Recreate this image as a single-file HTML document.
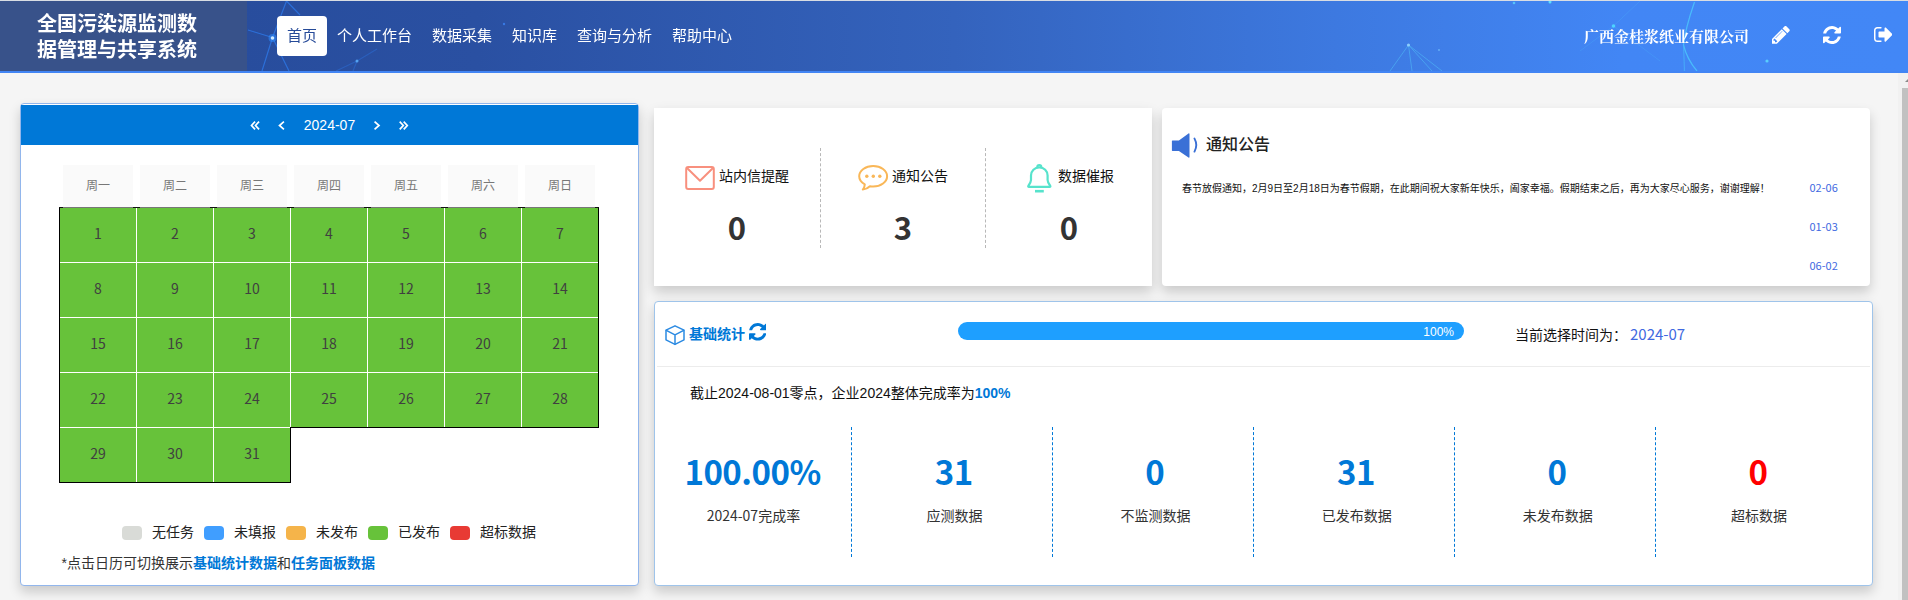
<!DOCTYPE html>
<html lang="zh-CN">
<head>
<meta charset="utf-8">
<title>全国污染源监测数据管理与共享系统</title>
<style>
*{box-sizing:border-box;margin:0;padding:0}
html,body{width:1908px;height:600px;overflow:hidden;background:#f5f5f5}
body{position:relative;font-family:"Liberation Sans","Noto Sans CJK SC",sans-serif;font-size:14px;color:#333}
.abs{position:absolute}
.cjk{font-family:"Noto Sans CJK SC","Liberation Sans",sans-serif}
/* header */
#hdr{position:absolute;left:0;top:0;width:1908px;height:73px;background:linear-gradient(90deg,#264a98 0%,#2a50a2 25%,#3463bd 50%,#3d79e0 70%,#4286f5 85%,#4287f6 100%);border-top:1px solid #d9dde3;border-bottom:2px solid #4285f4;overflow:hidden}
#logo{position:absolute;left:0;top:0;width:247px;height:70px;background:#38528a}
#logo div{position:absolute;left:37px;top:10px;width:180px;color:#fff;font-weight:bold;font-size:20px;line-height:26px;white-space:nowrap;font-family:"Liberation Sans","Noto Sans CJK SC",sans-serif}
#nav{position:absolute;left:277px;top:15px;height:40px;white-space:nowrap;font-size:15px;color:#fff}
#nav span{display:inline-block;height:40px;line-height:39px;padding:0 10px;border-radius:4px;vertical-align:top}
#nav span.on{background:#fff;color:#264a98}
#corp{position:absolute;left:1584px;top:26px;font-family:"Liberation Serif","Noto Serif CJK SC",serif;font-weight:bold;font-size:15px;line-height:20px;color:#fff;white-space:nowrap}
.hic{position:absolute;fill:#fff}
/* scrollbar */
#sbt{position:absolute;left:1898px;top:73px;width:10px;height:527px;background:#f1f1f1}
#sbh{position:absolute;left:1902px;top:88px;width:6px;height:512px;background:#c1c1c1}
#sba{position:absolute;left:1904.5px;top:78px;width:0;height:0;border-left:4px solid transparent;border-right:4px solid transparent;border-bottom:4px solid #8a8a8a}
/* cards */
.card{position:absolute;background:#fff;border-radius:4px}
#cal{left:20px;top:103px;width:619px;height:483px;border:1px solid #92b6ec;box-shadow:0 6px 12px rgba(0,0,0,.175)}
#calh{position:absolute;left:0;top:1px;width:617px;height:40px;background:#0078d7;color:#fff;font-size:14px;line-height:40px;text-align:center}
.wk{position:absolute;top:61px;width:70px;height:42px;background:#fafafa;color:#777;font-size:12px;line-height:42px;text-align:center}
#grid{position:absolute;left:38px;top:103px;width:540px;height:276px}
.cell{position:absolute;width:76px;height:54px;background:#67c23a;color:#404040;font-size:14px;line-height:51px;text-align:center;font-family:"Noto Sans CJK SC","Liberation Sans",sans-serif}
.leg{position:absolute;top:422px;width:20px;height:14px;border-radius:4px}
.legt{position:absolute;top:418px;font-size:14px;line-height:20px;color:#222;white-space:nowrap}
#note{position:absolute;left:40.6px;top:449px;font-size:14px;line-height:20px;color:#333;white-space:nowrap}
#note b{color:#0078d7}
#mid{left:654px;top:108px;width:498px;height:178px;box-shadow:0 6px 12px rgba(0,0,0,.175);border-radius:0}
.mcol{position:absolute;top:40px;width:0;height:100px;border-left:1px dashed #b8b8b8}
.mlab{position:absolute;top:58px;font-size:14px;line-height:20px;color:#111;white-space:nowrap}
.mnum{position:absolute;top:96.5px;width:166px;text-align:center;font-size:31px;line-height:44px;font-weight:bold;color:#333;font-family:"Noto Sans CJK SC","Liberation Sans",sans-serif}
#ntc{left:1162px;top:108px;width:708px;height:178px;box-shadow:0 6px 12px rgba(0,0,0,.175)}
#ntct{position:absolute;left:44px;top:25px;font-size:16px;line-height:24px;font-weight:500;color:#222;white-space:nowrap}
#ntcx{position:absolute;left:20px;top:74px;font-size:10px;line-height:14px;color:#111;white-space:nowrap}
.dt{position:absolute;left:647.5px;font-size:11px;line-height:16px;color:#4169e1;white-space:nowrap;font-family:"Noto Sans CJK SC","Liberation Sans",sans-serif}
#st{left:654px;top:301px;width:1219px;height:285px;border:1px solid #9fc4ea;box-shadow:0 6px 12px rgba(0,0,0,.175)}
#sthl{position:absolute;left:2px;top:64px;width:1213px;height:1px;background:#ececec}
#stt{position:absolute;left:34px;top:22px;font-size:14px;line-height:20px;font-weight:bold;color:#0078d7;white-space:nowrap}
#pg{position:absolute;left:303px;top:20px;width:506px;height:18px;border-radius:9px;background:#1e9fff;color:#fff;font-size:12px;line-height:20px;text-align:right;padding-right:10px}
#cur{position:absolute;left:860px;top:23px;font-size:14px;line-height:20px;color:#111;white-space:nowrap}
#curv{position:absolute;left:975px;top:21.4px;font-size:15px;line-height:22px;color:#4169e1;white-space:nowrap;font-family:"Noto Sans CJK SC","Liberation Sans",sans-serif}
#sum{position:absolute;left:35px;top:81px;font-size:14px;line-height:20px;color:#111;white-space:nowrap}
#sum b{color:#0078d7}
.sc{position:absolute;top:125px;width:0;height:130px;border-left:1px dashed #0078d7}
.sn{position:absolute;top:144px;margin-left:-.8px;width:200px;text-align:center;font-size:33px;letter-spacing:-.5px;line-height:50px;font-weight:bold;color:#0078d7;font-family:"Noto Sans CJK SC","Liberation Sans",sans-serif}
.sl{position:absolute;top:203px;width:200px;text-align:center;font-size:14px;line-height:20px;color:#333;font-family:"Noto Sans CJK SC","Liberation Sans",sans-serif}
</style>
</head>
<body>
<div id="hdr">
<svg class="abs" style="left:0;top:0;filter:blur(.6px)" width="1908" height="70" viewBox="0 0 1908 70" fill="none">
<g stroke="#2f86ff" stroke-width="1.2" opacity=".6">
<path d="M272.500 36.500L286.500 0M272.500 36.500L289 70M272.500 36.500L248 29M272.500 36.500L262 70M286.500 0L300 14"/>
<path d="M357 60L353 70M357 60L377 48M357 60L336 70" opacity=".5"/>
</g>
<circle cx="272.500" cy="37" r="4" fill="#2f8cff" opacity=".55"/><circle cx="272.500" cy="37" r="1.800" fill="#cfeaff"/>
<circle cx="357" cy="60" r="1.500" fill="#5fb4ff" opacity=".8"/>
<circle cx="504" cy="23" r="1.200" fill="#3f8cff" opacity=".7"/>
<g stroke="#58d8ff" stroke-width="1" opacity=".4">
<path d="M1408.500 44L1390 70M1408.500 44L1412 70M1408.500 44L1442 70M1408.500 44L1432 70"/>
<path d="M1613.500 25L1640 0M1613.500 25L1580 50M1613.500 25L1660 60" opacity=".4"/>
</g>
<g stroke="#4fe0ff" stroke-width="1.200" opacity=".6">
<path d="M1694.500 1C1690 14 1685 30 1683.500 44C1686 54 1691 63 1697 70"/>
<path d="M1683.500 44L1684.500 70" opacity=".6"/>
</g>
<circle cx="1408.500" cy="44" r="1.600" fill="#9fdcff" opacity=".8"/>
<circle cx="1439" cy="49" r="1" fill="#7fd0ff" opacity=".6"/>
<circle cx="1514" cy="2" r="1.300" fill="#5fe0ff" opacity=".7"/>
<circle cx="1550" cy="1" r="1.500" fill="#5fe8ff" opacity=".9"/>
<circle cx="1613.500" cy="25" r="1.800" fill="#4fdcff" opacity=".9"/>
<circle cx="1767" cy="60" r="1.600" fill="#5fe0ff" opacity=".8"/>
</svg>
<div id="logo"><div>全国污染源监测数<br>据管理与共享系统</div></div>
<div id="nav"><span class="on">首页</span><span>个人工作台</span><span>数据采集</span><span>知识库</span><span>查询与分析</span><span>帮助中心</span></div>
<div id="corp">广西金桂浆纸业有限公司</div>
<svg class="abs" style="left:1772.4px;top:25.2px" width="17.75" height="17.75" viewBox="0 -1387 1515 1515" preserveAspectRatio="none"><path fill="#fff" transform="scale(1,-1)" d="M363 0H256V128H128V235L219 326L454 91ZM886 928C886 922 884 916 879 911L337 369C332 364 326 362 320 362C307 362 298 371 298 384C298 390 300 396 305 401L847 943C852 948 858 950 864 950C877 950 886 941 886 928ZM832 1120 0 288V-128H416L1248 704ZM1515 1024C1515 1058 1501 1091 1478 1115L1243 1349C1219 1373 1186 1387 1152 1387C1118 1387 1085 1373 1062 1349L896 1184L1312 768L1478 934C1501 957 1515 990 1515 1024Z"/></svg>
<svg class="abs" style="left:1822.8px;top:24.8px" width="18" height="18" viewBox="0 -1408 1536 1536" preserveAspectRatio="none"><path fill="#fff" transform="scale(1,-1)" d="M1511 480C1511 497 1497 512 1479 512H1287C1272 512 1262 503 1257 489C1240 449 1228 411 1204 372C1111 220 946 128 768 128C639 128 514 178 420 266L557 403C569 415 576 431 576 448C576 483 547 512 512 512H64C29 512 0 483 0 448V0C0 -35 29 -64 64 -64C81 -64 97 -57 109 -45L238 84C380 -51 569 -128 764 -128C1133 -128 1425 119 1510 473C1511 475 1511 478 1511 480ZM1536 1280C1536 1315 1507 1344 1472 1344C1455 1344 1439 1337 1427 1325L1297 1196C1155 1330 964 1408 768 1408C399 1408 104 1162 18 807C18 805 18 802 18 800C18 783 32 768 50 768H249C264 768 274 777 279 791C296 831 308 869 332 908C425 1060 590 1152 768 1152C897 1152 1022 1103 1117 1015L979 877C967 865 960 849 960 832C960 797 989 768 1024 768H1472C1507 768 1536 797 1536 832Z"/></svg>
<svg class="abs" style="left:1873.8px;top:26.4px" width="18.4" height="15" viewBox="0 -1280 1568 1280" preserveAspectRatio="none"><path fill="#fff" transform="scale(1,-1)" d="M640 96C640 133 601 128 576 128H288C200 128 128 200 128 288V992C128 1080 200 1152 288 1152H608C653 1152 640 1220 640 1248C640 1265 625 1280 608 1280H288C129 1280 0 1151 0 992V288C0 129 129 0 288 0H608C653 0 640 68 640 96ZM1568 640C1568 657 1561 673 1549 685L1005 1229C993 1241 977 1248 960 1248C925 1248 896 1219 896 1184V896H448C413 896 384 867 384 832V448C384 413 413 384 448 384H896V96C896 61 925 32 960 32C977 32 993 39 1005 51L1549 595C1561 607 1568 623 1568 640Z"/></svg>
</div>
<div id="sbt"></div><div id="sbh"></div><div id="sba"></div>
<div class="card" id="cal">
<div id="calh">2024-07<svg class="abs" style="left:229px;top:14px" width="160" height="13" viewBox="0 0 160 13" fill="none" stroke="#fff" stroke-width="1.700" stroke-linecap="square" stroke-linejoin="miter"><polyline points="4.500,3.200 1.500,6.500 4.500,9.800"/><polyline points="8.500,3.200 5.500,6.500 8.500,9.800"/><polyline points="33.300,3.200 29.500,6.500 33.300,9.800"/><polyline points="125.200,3.200 129,6.500 125.200,9.800"/><polyline points="150.300,3.200 153.300,6.500 150.300,9.800"/><polyline points="154.300,3.200 157.300,6.500 154.300,9.800"/></svg></div>
<div class="wk" style="left:42px">周一</div><div class="wk" style="left:119px">周二</div><div class="wk" style="left:196px">周三</div><div class="wk" style="left:273px">周四</div><div class="wk" style="left:350px">周五</div><div class="wk" style="left:427px">周六</div><div class="wk" style="left:504px">周日</div>
<div id="grid"><div class="abs" style="left:0;top:0;width:540px;height:221px;background:#000"></div><div class="abs" style="left:0;top:0;width:232px;height:276px;background:#000"></div><div class="abs" style="left:1px;top:1px;width:538px;height:219px;background:#fff"></div><div class="abs" style="left:1px;top:1px;width:230px;height:274px;background:#fff"></div><div class="abs" style="left:1px;top:0;width:538px;height:1px;background:#777"></div><div class="abs" style="left:0;top:0;width:4px;height:1px;background:#111"></div><div class="abs" style="left:74px;top:0;width:7px;height:1px;background:#111"></div><div class="abs" style="left:151px;top:0;width:7px;height:1px;background:#111"></div><div class="abs" style="left:228px;top:0;width:7px;height:1px;background:#111"></div><div class="abs" style="left:305px;top:0;width:7px;height:1px;background:#111"></div><div class="abs" style="left:382px;top:0;width:7px;height:1px;background:#111"></div><div class="abs" style="left:459px;top:0;width:7px;height:1px;background:#111"></div><div class="abs" style="left:536px;top:0;width:4px;height:1px;background:#111"></div><div class="cell" style="left:1px;top:1px">1</div><div class="cell" style="left:78px;top:1px">2</div><div class="cell" style="left:155px;top:1px">3</div><div class="cell" style="left:232px;top:1px">4</div><div class="cell" style="left:309px;top:1px">5</div><div class="cell" style="left:386px;top:1px">6</div><div class="cell" style="left:463px;top:1px">7</div><div class="cell" style="left:1px;top:56px">8</div><div class="cell" style="left:78px;top:56px">9</div><div class="cell" style="left:155px;top:56px">10</div><div class="cell" style="left:232px;top:56px">11</div><div class="cell" style="left:309px;top:56px">12</div><div class="cell" style="left:386px;top:56px">13</div><div class="cell" style="left:463px;top:56px">14</div><div class="cell" style="left:1px;top:111px">15</div><div class="cell" style="left:78px;top:111px">16</div><div class="cell" style="left:155px;top:111px">17</div><div class="cell" style="left:232px;top:111px">18</div><div class="cell" style="left:309px;top:111px">19</div><div class="cell" style="left:386px;top:111px">20</div><div class="cell" style="left:463px;top:111px">21</div><div class="cell" style="left:1px;top:166px">22</div><div class="cell" style="left:78px;top:166px">23</div><div class="cell" style="left:155px;top:166px">24</div><div class="cell" style="left:232px;top:166px">25</div><div class="cell" style="left:309px;top:166px">26</div><div class="cell" style="left:386px;top:166px">27</div><div class="cell" style="left:463px;top:166px">28</div><div class="cell" style="left:1px;top:221px">29</div><div class="cell" style="left:78px;top:221px">30</div><div class="cell" style="left:155px;top:221px">31</div></div>
<div class="leg" style="left:101px;background:#d9dbd7"></div><div class="legt" style="left:131px">无任务</div><div class="leg" style="left:183px;background:#409eff"></div><div class="legt" style="left:213px">未填报</div><div class="leg" style="left:265px;background:#f5b44a"></div><div class="legt" style="left:295px">未发布</div><div class="leg" style="left:347px;background:#67c23a"></div><div class="legt" style="left:377px">已发布</div><div class="leg" style="left:429px;background:#e83a34"></div><div class="legt" style="left:459px">超标数据</div>
<div id="note">*点击日历可切换展示<b>基础统计数据</b>和<b>任务面板数据</b></div>
</div>
<div class="card" id="mid">
<div class="mcol" style="left:166px"></div><div class="mcol" style="left:331px"></div>
<svg class="abs" style="left:30px;top:56px" width="32" height="27" viewBox="0 0 32 27" fill="none" stroke="#f8907e" stroke-width="2" stroke-linejoin="round" stroke-linecap="round"><rect x="2.200" y="3.100" width="27.600" height="21.800" rx="2"/><polyline points="3,4 16,16.800 29,4"/></svg><div class="mlab" style="left:65px">站内信提醒</div><div class="mnum" style="left:0">0</div>
<svg class="abs" style="left:203px;top:56px" width="32" height="28" viewBox="0 0 32 28" fill="none" stroke="#f9b758" stroke-width="2" stroke-linejoin="round" stroke-linecap="round"><path d="M16.200 2C8.500 2 2.200 6.500 2.200 12.200c0 3.400 2.200 6.300 5.600 8.200c-.1 2-.8 3.800-2 5.200c2.900-.4 5.300-1.600 7.100-3.400c1.100.2 2.200.3 3.300.3c7.700 0 13.900-4.600 13.900-10.300S23.900 2 16.200 2z"/><g fill="#f9b758" stroke="none"><circle cx="9.800" cy="12.300" r="1.700"/><circle cx="16.300" cy="12.300" r="1.700"/><circle cx="22.800" cy="12.300" r="1.700"/></g></svg><div class="mlab" style="left:238px">通知公告</div><div class="mnum" style="left:166px">3</div>
<svg class="abs" style="left:372px;top:54px" width="28" height="32" viewBox="0 0 28 32" fill="none" stroke="#57e3cc" stroke-width="2.200" stroke-linejoin="round" stroke-linecap="round"><path d="M11.300 5.200A2 2 0 1 1 15.300 5.200"/><path d="M13.300 5.400C8.600 5.400 5 9 5 13.600V18C5 20 3.600 22.200 2.300 24C2 24.500 2.300 24.900 2.900 24.900H23.700C24.300 24.900 24.600 24.500 24.300 24C23 22.200 21.600 20 21.600 18V13.600C21.600 9 18 5.400 13.300 5.400Z"/><line x1="9" y1="29.200" x2="17.800" y2="29.200" stroke-width="2.600" stroke-linecap="butt"/></svg><div class="mlab" style="left:404px">数据催报</div><div class="mnum" style="left:332px">0</div>
</div>
<div class="card" id="ntc">
<svg class="abs" style="left:9px;top:24px" width="28" height="28" viewBox="0 0 28 28"><path fill="#3a70d6" d="M1.400 8.600h6.500l9.600-7.200c.5-.4 1-.1 1 .5v23.200c0 .6-.5.900-1 .5l-9.600-6.600H1.400c-.3 0-.5-.2-.5-.5V9.100c0-.3.200-.5.500-.5z"/><path fill="none" stroke="#3a70d6" stroke-width="1.900" stroke-linecap="round" d="M23.500 6.600C25.700 10.600 25.700 15.600 23.500 19.600"/></svg><div id="ntct">通知公告</div>
<div id="ntcx">春节放假通知，2月9日至2月18日为春节假期，在此期间祝大家新年快乐，阖家幸福。假期结束之后，再为大家尽心服务，谢谢理解！</div>
<div class="dt" style="top:71px">02-06</div><div class="dt" style="top:110px">01-03</div><div class="dt" style="top:149px">06-02</div>
</div>
<div class="card" id="st">
<div id="sthl"></div>
<svg class="abs" style="left:9px;top:22px" width="22" height="22" viewBox="0 0 22 22" fill="none" stroke="#2b8ae2" stroke-width="1.500" stroke-linejoin="round" stroke-linecap="round"><path d="M11 1.800L20 6.200V15.800L11 20.400L2 15.800V6.200Z"/><path d="M2.300 6.400L11 10.800L19.700 6.400M11 10.800V20.200"/></svg><div id="stt">基础统计</div><svg class="abs" style="left:93.5px;top:21px" width="17.6" height="17.6" viewBox="0 -1408 1536 1536" preserveAspectRatio="none"><path fill="#0078d7" transform="scale(1,-1)" d="M1511 480C1511 497 1497 512 1479 512H1287C1272 512 1262 503 1257 489C1240 449 1228 411 1204 372C1111 220 946 128 768 128C639 128 514 178 420 266L557 403C569 415 576 431 576 448C576 483 547 512 512 512H64C29 512 0 483 0 448V0C0 -35 29 -64 64 -64C81 -64 97 -57 109 -45L238 84C380 -51 569 -128 764 -128C1133 -128 1425 119 1510 473C1511 475 1511 478 1511 480ZM1536 1280C1536 1315 1507 1344 1472 1344C1455 1344 1439 1337 1427 1325L1297 1196C1155 1330 964 1408 768 1408C399 1408 104 1162 18 807C18 805 18 802 18 800C18 783 32 768 50 768H249C264 768 274 777 279 791C296 831 308 869 332 908C425 1060 590 1152 768 1152C897 1152 1022 1103 1117 1015L979 877C967 865 960 849 960 832C960 797 989 768 1024 768H1472C1507 768 1536 797 1536 832Z"/></svg>
<div id="pg">100%</div>
<div id="cur">当前选择时间为：</div><div id="curv">2024-07</div>
<div id="sum">截止2024-08-01零点，企业2024整体完成率为<b>100%</b></div>
<div class="sc" style="left:196px"></div><div class="sn" style="left:-1.6px;">100.00%</div><div class="sl" style="left:-1.6px">2024-07完成率</div><div class="sc" style="left:397px"></div><div class="sn" style="left:199.5px;">31</div><div class="sl" style="left:199.5px">应测数据</div><div class="sc" style="left:598px"></div><div class="sn" style="left:400.6px;">0</div><div class="sl" style="left:400.6px">不监测数据</div><div class="sc" style="left:799px"></div><div class="sn" style="left:601.7px;">31</div><div class="sl" style="left:601.7px">已发布数据</div><div class="sc" style="left:1000px"></div><div class="sn" style="left:802.8px;">0</div><div class="sl" style="left:802.8px">未发布数据</div><div class="sn" style="left:1003.9px;color:#ff0000">0</div><div class="sl" style="left:1003.9px">超标数据</div>
</div>
</body>
</html>
